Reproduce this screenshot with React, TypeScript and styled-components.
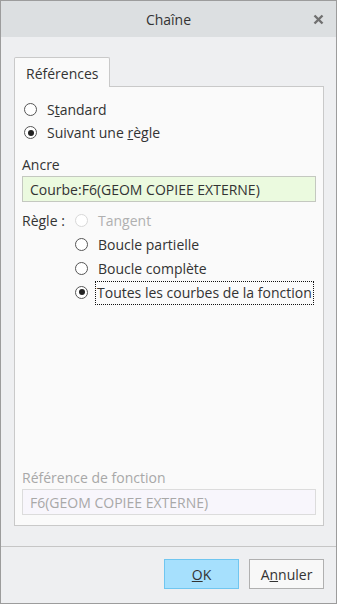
import React from "react";
import styled, { createGlobalStyle } from "styled-components";

const Global = createGlobalStyle`
  html, body { margin: 0; padding: 0; background: #eeeff1; }
  body { font-family: "Open Sans", "Noto Sans", sans-serif; }
  * { box-sizing: border-box; }
`;

const Window = styled.div`
  width: 337px;
  height: 604px;
  border: 1px solid #9c9c9c;
  background: #eeeff1;
  display: flex;
  flex-direction: column;
  color: #333;
  font-size: 14px;
`;

const TitleBar = styled.div`
  height: 36px;
  background: #dcdfe1;
  display: grid;
  grid-template-columns: 1fr auto 1fr;
  align-items: center;
  flex-shrink: 0;
`;

const Title = styled.div`
  grid-column: 2;
  font-size: 14px;
  color: #333;
`;

const Close = styled.div`
  grid-column: 3;
  justify-self: end;
  margin-right: 12px;
  display: flex;
`;

const Body = styled.div`
  flex: 1;
  padding: 20px 12px 0 13px;
  display: flex;
  flex-direction: column;
`;

const Tabs = styled.div`
  display: flex;
`;

const Tab = styled.div`
  height: 30px;
  padding: 6px 11px 0 11px;
  border: 1px solid #c9c9c9;
  border-bottom: none;
  background: #fafafa;
  margin-bottom: -1px;
  position: relative;
  z-index: 1;
  border-radius: 2px 2px 0 0;
  color: #333;
`;

const Panel = styled.div`
  height: 440px;
  border: 1px solid #c9c9c9;
  background: #fafafa;
  padding: 11px 7px 10px 7px;
  display: flex;
  flex-direction: column;
`;

const RadioRow = styled.label<{ $disabled?: boolean; $tight?: boolean }>`
  display: flex;
  align-items: center;
  height: ${(p) => (p.$tight ? "23px" : "24px")};
  color: ${(p) => (p.$disabled ? "#b0b0b0" : "#333")};
`;

const Circle = styled.span<{ $checked?: boolean; $disabled?: boolean }>`
  width: 13px;
  height: 13px;
  border-radius: 50%;
  border: 1.5px solid ${(p) => (p.$disabled ? "#d8d8d8" : "#555")};
  background: #fff;
  display: inline-flex;
  align-items: center;
  justify-content: center;
  margin: 0 10px 0 2px;
  flex-shrink: 0;
  &::after {
    content: "";
    width: 6px;
    height: 6px;
    border-radius: 50%;
    background: #222;
    display: ${(p) => (p.$checked ? "block" : "none")};
  }
`;

const FocusText = styled.span`
  outline: 1px dotted #111;
  padding: 1px 1px 2px 1px;
  margin-left: -2px;
`;

const U = styled.span`
  text-decoration: underline;
`;

const FieldLabel = styled.div<{ $disabled?: boolean }>`
  margin-top: 10px;
  height: 20px;
  display: flex;
  align-items: center;
  color: ${(p) => (p.$disabled ? "#a8a8a8" : "#333")};
`;

const Field = styled.div<{ $variant: "ok" | "disabled" }>`
  height: 26px;
  margin-top: 2px;
  border: 1px solid ${(p) => (p.$variant === "ok" ? "#c4c8c0" : "#dcdcdc")};
  background: ${(p) => (p.$variant === "ok" ? "#ebfadf" : "#f8f6fc")};
  color: ${(p) => (p.$variant === "ok" ? "#333" : "#a8a8a8")};
  display: flex;
  align-items: center;
  padding: 0 7px;
`;

const RuleGrid = styled.div`
  margin-top: 6px;
  display: grid;
  grid-template-columns: 51px 1fr;
`;

const RuleLabel = styled.div`
  height: 24px;
  display: flex;
  align-items: center;
`;

const RuleOptions = styled.div`
  display: flex;
  flex-direction: column;
`;

const Spacer = styled.div`
  flex: 1;
`;

const Footer = styled.div`
  border-top: 1px solid #c6c6c6;
  margin: 20px -12px 0 -13px;
  height: 56px;
  display: flex;
  justify-content: flex-end;
  align-items: flex-start;
  padding: 12px 12px 0 0;
  gap: 10px;
`;

const Button = styled.button<{ $primary?: boolean }>`
  width: 75px;
  height: 30px;
  font: inherit;
  font-size: 14px;
  color: #333;
  border: 1px solid ${(p) => (p.$primary ? "#70c6f0" : "#b0b0b0")};
  background: ${(p) => (p.$primary ? "#a6e0fd" : "#f8f8f8")};
  padding: 0;
`;

function Radio({
  checked,
  disabled,
  tight,
  children,
}: {
  checked?: boolean;
  disabled?: boolean;
  tight?: boolean;
  children: React.ReactNode;
}) {
  return (
    <RadioRow $disabled={disabled} $tight={tight}>
      <Circle $checked={checked} $disabled={disabled} />
      <span>{children}</span>
    </RadioRow>
  );
}

export default function App() {
  return (
    <>
      <Global />
      <Window>
        <TitleBar>
          <Title>Chaîne</Title>
          <Close>
            <svg width="11" height="11" viewBox="0 0 11 11">
              <path d="M1.5 1.5 L9.5 9.5 M9.5 1.5 L1.5 9.5" stroke="#707070" strokeWidth="2.4" />
            </svg>
          </Close>
        </TitleBar>
        <Body>
          <Tabs>
            <Tab>Références</Tab>
          </Tabs>
          <Panel>
            <Radio tight>
              S<U>t</U>andard
            </Radio>
            <Radio tight checked>
              Suivant une <U>r</U>ègle
            </Radio>
            <FieldLabel>Ancre</FieldLabel>
            <Field $variant="ok">Courbe:F6(GEOM COPIEE EXTERNE)</Field>
            <RuleGrid>
              <RuleLabel>Règle :</RuleLabel>
              <RuleOptions>
                <Radio disabled>Tangent</Radio>
                <Radio>Boucle partielle</Radio>
                <Radio>Boucle complète</Radio>
                <Radio checked>
                  <FocusText>Toutes les courbes de la fonction</FocusText>
                </Radio>
              </RuleOptions>
            </RuleGrid>
            <Spacer />
            <FieldLabel $disabled>Référence de fonction</FieldLabel>
            <Field $variant="disabled">F6(GEOM COPIEE EXTERNE)</Field>
          </Panel>
          <Footer>
            <Button $primary>
              <U>O</U>K
            </Button>
            <Button>
              A<U>n</U>nuler
            </Button>
          </Footer>
        </Body>
      </Window>
    </>
  );
}
